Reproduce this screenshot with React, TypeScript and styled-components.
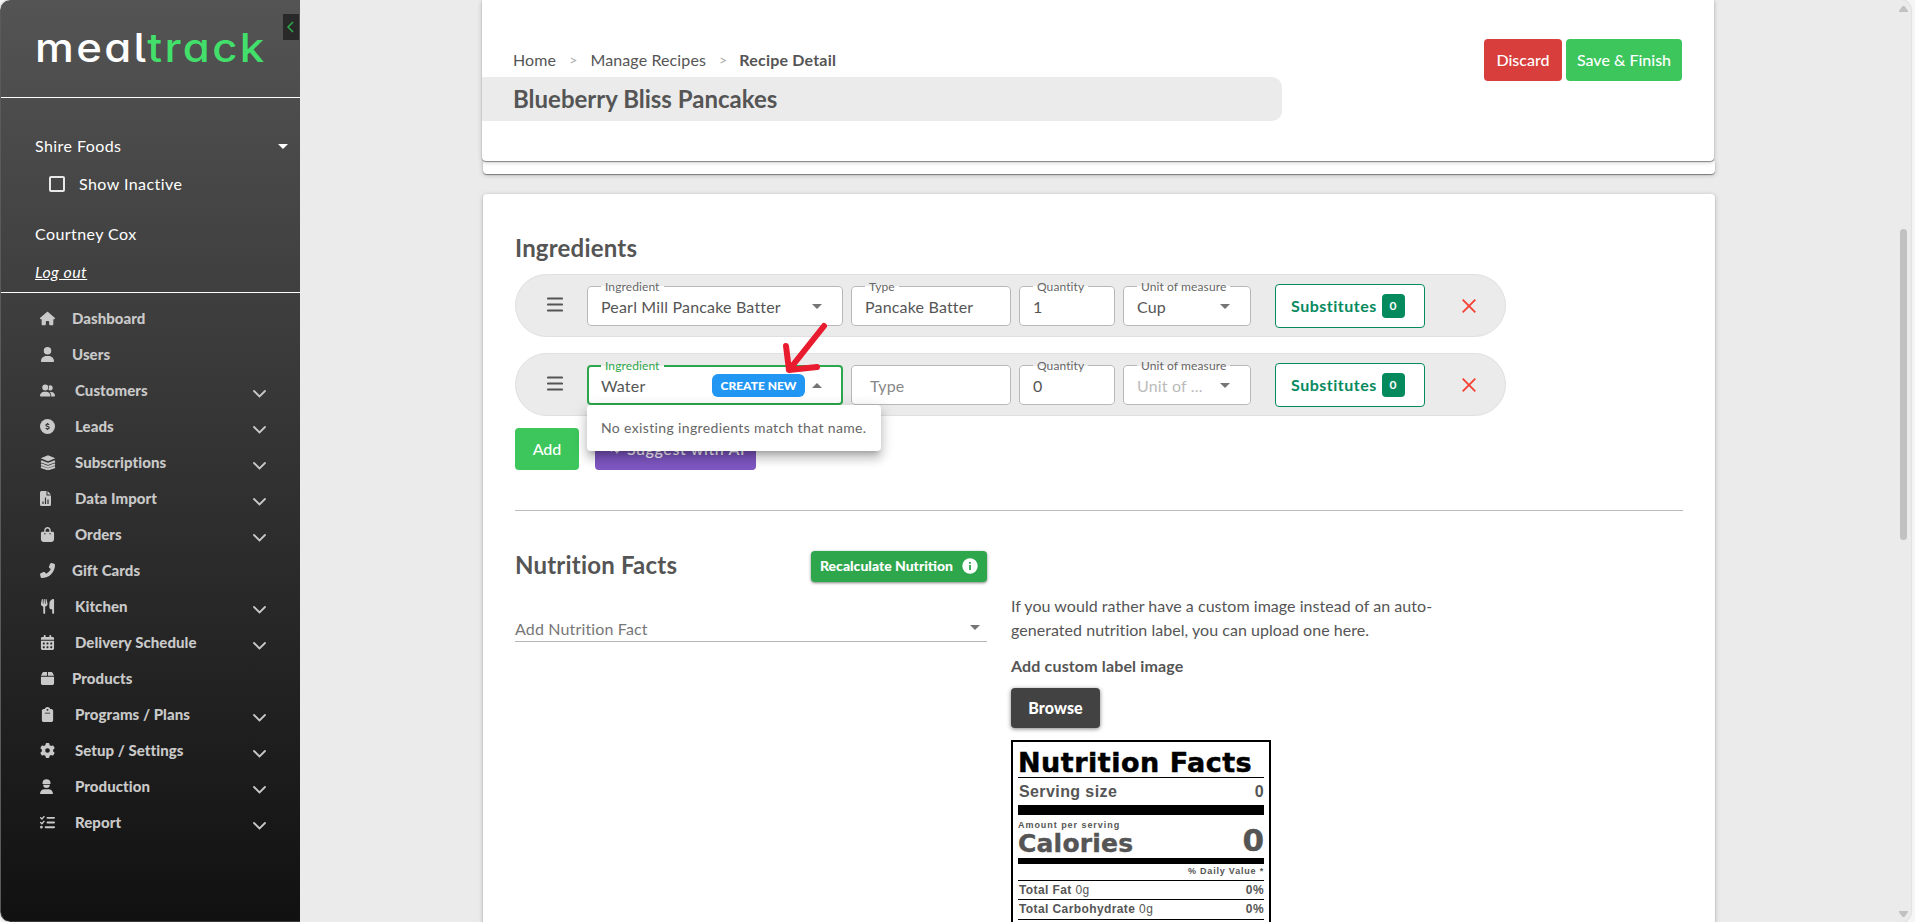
import React from 'react'
import styled, { createGlobalStyle, css } from 'styled-components'
import { IconType } from 'react-icons'
import {
  FaBagShopping,
  FaBox,
  FaCalendarDays,
  FaClipboard,
  FaGear,
  FaHouse,
  FaListCheck,
  FaPhoneFlip,
  FaUser,
  FaUserGroup,
  FaUtensils,
} from 'react-icons/fa6'

/** Types **/
type MenuItem = {
  label: string
  icon: IconType | React.FC
  expandable?: boolean
}

type Ingredient = {
  name: string
  type: string
  quantity: string
  unit: string
  active?: boolean
}

/** Icons **/
const LeadsIcon = () => (
  <svg width="15" height="15" viewBox="0 0 15 15">
    <circle cx="7.5" cy="7.5" r="7.5" fill="currentColor" />
    <path
      d="M9.2 5.8C8.8 4.9 5.9 4.7 5.9 6.2c0 1.5 3.3.9 3.3 2.5 0 1.6-3 1.5-3.5.4M7.5 4v1M7.5 10v1"
      fill="none"
      stroke="#333"
      strokeWidth="1.1"
    />
  </svg>
)

const StackIcon = () => (
  <svg width="16" height="15" viewBox="0 0 16 15">
    <path d="M8 .3 15.3 3.3 8 6.3.7 3.3z" fill="currentColor" />
    <path
      d="M1 6.3 8 9l7-2.7M1 9.2l7 2.7 7-2.7M1 12l7 2.4L15 12"
      fill="none"
      stroke="currentColor"
      strokeWidth="2"
    />
  </svg>
)

const FileChartIcon = () => (
  <svg width="11" height="15" viewBox="0 0 11 15">
    <path
      d="M1.5 0H6.5V4.5H11V13.5a1.5 1.5 0 0 1-1.5 1.5h-8A1.5 1.5 0 0 1 0 13.5v-12A1.5 1.5 0 0 1 1.5 0zM7.5 0 11 3.5H7.5z"
      fill="currentColor"
    />
    <path d="M3 10.5v2.5M5.5 6.5V13M8 8.5V13" stroke="#333" strokeWidth="1.2" />
  </svg>
)

const WorkerIcon = () => (
  <svg width="13" height="15" viewBox="0 0 13 15">
    <path
      d="M2.5 4.2a4 4 0 0 1 8 0v.9h-8zM3.2 5.7h6.6a3.3 3.3 0 0 1-6.6 0zM0 15c0-3 2-4.7 4.4-4.7h4.2C11 10.3 13 12 13 15z"
      fill="currentColor"
    />
  </svg>
)

const ChevronIcon = () => (
  <svg width="13" height="8" viewBox="0 0 13 8">
    <path
      d="M1 1l5.5 5.5L12 1"
      fill="none"
      stroke="currentColor"
      strokeWidth="1.8"
      strokeLinecap="round"
    />
  </svg>
)

const menu: MenuItem[] = [
  { label: 'Dashboard', icon: FaHouse },
  { label: 'Users', icon: FaUser },
  { label: 'Customers', icon: FaUserGroup, expandable: true },
  { label: 'Leads', icon: LeadsIcon, expandable: true },
  { label: 'Subscriptions', icon: StackIcon, expandable: true },
  { label: 'Data Import', icon: FileChartIcon, expandable: true },
  { label: 'Orders', icon: FaBagShopping, expandable: true },
  { label: 'Gift Cards', icon: FaPhoneFlip },
  { label: 'Kitchen', icon: FaUtensils, expandable: true },
  { label: 'Delivery Schedule', icon: FaCalendarDays, expandable: true },
  { label: 'Products', icon: FaBox },
  { label: 'Programs / Plans', icon: FaClipboard, expandable: true },
  { label: 'Setup / Settings', icon: FaGear, expandable: true },
  { label: 'Production', icon: WorkerIcon, expandable: true },
  { label: 'Report', icon: FaListCheck, expandable: true },
]

const ingredients: Ingredient[] = [
  { name: 'Pearl Mill Pancake Batter', type: 'Pancake Batter', quantity: '1', unit: 'Cup' },
  { name: 'Water', type: '', quantity: '0', unit: '', active: true },
]

/** Layout **/
const GlobalStyle = createGlobalStyle`
  * {
    box-sizing: border-box;
  }
  body {
    margin: 0;
    overflow: hidden;
    background: #f6f6f6;
    color: #555;
    font-family: Lato, 'Liberation Sans', sans-serif;
    font-size: 16px;
  }
  svg {
    display: block;
    flex: none;
  }
`

const Page = styled.div`
  display: flex;
  width: 1911px;
  height: 922px;
  overflow: hidden;
  border-radius: 10px;
  background: #ebebeb;
  box-shadow: 0 0 1px 1px #e0e0e0;
`

const Sidebar = styled.aside`
  position: relative;
  flex: none;
  width: 300px;
  border-left: 1px solid #5a5a5a;
  border-bottom: 1px solid #3a3a3a;
  border-radius: 10px 0 0 10px;
  background: linear-gradient(#545454, #111);
  color: #fff;
`

const LogoArea = styled.div`
  height: 98px;
  padding: 17px 0 0 34px;
  border-bottom: 1px solid #fff;
`

const Logo = styled.div`
  width: 210px;
  font-family: Inter, sans-serif;
  font-weight: 500;
  font-size: 39px;
  line-height: 62px;
  letter-spacing: 2.1px;
  font-feature-settings: 'cv11', 'cv05', 'ss03';
  white-space: nowrap;
  transform: scaleX(1.12);
  transform-origin: left;

  > span {
    color: #43df6b;
  }
`

const Collapse = styled.button`
  position: absolute;
  top: 14px;
  right: 1px;
  display: flex;
  align-items: center;
  justify-content: center;
  width: 16px;
  height: 26px;
  padding: 0 2px 0 0;
  border: 0;
  background: #292929;
  color: #2eae4d;
`

const Account = styled.div`
  display: flex;
  flex-direction: column;
  height: 195px;
  padding: 36px 12px 0 34px;
  border-bottom: 1px solid #fff;
  line-height: 24px;
  letter-spacing: 0.43px;
`

const Company = styled.div`
  display: flex;
  align-items: center;
  justify-content: space-between;
`

const Inactive = styled.label`
  display: flex;
  align-items: center;
  gap: 14px;
  margin: 14px 0 26px 14px;
`

const Box = styled.span`
  width: 16px;
  height: 16px;
  border: 2px solid #e8e8e8;
  border-radius: 2px;
`

const Logout = styled.a`
  margin-top: 14px;
  font-style: italic;
  text-decoration: underline;
`

const Nav = styled.nav`
  padding: 7px 34px 0 39px;
  color: #c9c9c9;
`

const NavItem = styled.div`
  display: flex;
  align-items: center;
  height: 36px;
  font-weight: 900;
  font-size: 15px;
  letter-spacing: 0.05px;
`

const NavIcon = styled.span<{ $expandable?: boolean }>`
  width: ${({ $expandable }) => ($expandable ? 35 : 32)}px;

  > svg {
    width: auto;
    height: 15px;
  }
`

const NavChevron = styled.span`
  margin: 8px 0 0 auto;
`

const Main = styled.main`
  display: flex;
  flex: 1;
  flex-direction: column;
  align-items: flex-start;
  padding-left: 182px;
`

const cardShadow = css`
  box-shadow: 0 1px 1px rgba(0, 0, 0, 0.4), 0 1px 5px rgba(0, 0, 0, 0.22);
`

const HeaderCard = styled.header`
  ${cardShadow}
  z-index: 1;
  flex: none;
  width: 1232px;
  height: 161px;
  padding-top: 39px;
  border-radius: 0 0 4px 4px;
  background: #fff;
`

const BehindCard = styled.div`
  ${cardShadow}
  flex: none;
  width: 1232px;
  height: 13px;
  margin-left: 1px;
  border-radius: 0 0 4px 4px;
  background: #fff;
`

const HeaderTop = styled.div`
  display: flex;
  justify-content: space-between;
  height: 38px;
  padding: 0 32px 0 31px;
`

const Breadcrumb = styled.div`
  display: flex;
  gap: 13px;
  padding-top: 9px;
  line-height: 24px;
  letter-spacing: 0.12px;

  > i {
    color: #aaa;
    font-style: normal;
    font-size: 14px;
  }
  > b {
    margin-left: -1px;
    letter-spacing: 0.2px;
  }
`

const Title = styled.h1`
  width: 800px;
  height: 44px;
  margin: 0;
  padding-left: 31px;
  border-radius: 0 10px 10px 0;
  background: #ebebeb;
  font-size: 24px;
  line-height: 44px;
`

const Actions = styled.div<{ $gap: number; $top?: number }>`
  display: flex;
  gap: ${({ $gap }) => $gap}px;
  margin-top: ${({ $top }) => $top || 0}px;
`

const Button = styled.button<{ $color: string; $width: number; $spacing?: number }>`
  display: flex;
  align-items: center;
  justify-content: center;
  gap: 7px;
  width: ${({ $width }) => $width}px;
  height: 42px;
  padding: 0 0 2px;
  border: 0;
  border-radius: 4px;
  background: ${({ $color }) => $color};
  color: #fff;
  font: 500 16px Lato, sans-serif;
  letter-spacing: ${({ $spacing }) => $spacing || 0}px;
  white-space: nowrap;
`

const ContentCard = styled.section`
  ${cardShadow}
  flex: none;
  width: 1232px;
  height: 760px;
  margin: 20px 0 0 1px;
  padding: 37px 32px 0;
  border-radius: 4px;
  background: #fff;
`

const Heading = styled.h2<{ $bottom?: number }>`
  margin: 0 0 ${({ $bottom }) => $bottom || 0}px;
  font-weight: 700;
  font-size: 24px;
  line-height: 34px;
  letter-spacing: 0.2px;
`

/** Ingredient rows **/
const Row = styled.div`
  display: flex;
  align-items: flex-start;
  width: 991px;
  height: 63px;
  margin: 0 0 16px;
  padding: 11px 0 0 31px;
  border: 1px solid #e0e0e0;
  border-radius: 32px;
  background: #ebebeb;
`

const Handle = styled.div`
  width: 40px;
  padding-top: 11px;
`

const FieldBox = styled.fieldset<{ $width: number; $active?: boolean }>`
  position: relative;
  display: flex;
  align-items: center;
  width: ${({ $width }) => $width}px;
  height: 40px;
  min-width: 0;
  margin: 0 8px 0 0;
  padding: 0 20px 0 ${({ $active }) => ($active ? 12 : 13)}px;
  border: ${({ $active }) => ($active ? '2px solid #2ea64c' : '1px solid #b8b8b8')};
  border-radius: 4px;
  background: #fff;
  white-space: nowrap;
`

const FieldLabel = styled.span<{ $active?: boolean }>`
  position: absolute;
  top: ${({ $active }) => ($active ? -9 : -8)}px;
  left: ${({ $active }) => ($active ? 12 : 13)}px;
  padding: 0 4px;
  background: linear-gradient(#ebebeb 50%, #fff 50%);
  color: ${({ $active }) => ($active ? '#2ea64c' : '#666')};
  font-size: 12px;
  line-height: 15px;
  letter-spacing: 0.1px;
`

const Value = styled.span<{ $tone?: string; $indent?: number }>`
  flex: 1;
  padding-left: ${({ $indent }) => $indent || 0}px;
  color: ${({ $tone }) => $tone || '#555'};
  letter-spacing: 0.18px;
`

const CreateNew = styled.button`
  width: 93px;
  height: 23px;
  margin: 1px 7px 0 0;
  padding: 0;
  border: 0;
  border-radius: 6px;
  background: #2196f3;
  color: #fff;
  font: 900 12px Lato, sans-serif;
`

const Caret = styled.span<{ $up?: boolean; $light?: boolean }>`
  flex: none;
  width: 0;
  margin-right: ${({ $up }) => ($up ? -1 : 0)}px;
  border: 5px solid transparent;
  border-width: ${({ $up }) => ($up ? '0 5px 5px' : '5px 5px 0')};
  border-${({ $up }) => ($up ? 'bottom' : 'top')}-color: ${({ $light }) =>
    $light ? '#fff' : '#757575'};
`

const Substitutes = styled.button`
  display: flex;
  align-items: center;
  gap: 5px;
  width: 150px;
  height: 44px;
  margin: -2px 0 0 16px;
  padding: 0 0 1px 15px;
  border: 1px solid #058a5e;
  border-radius: 4px;
  background: #fff;
  color: #058a5e;
  font: 700 16px Lato, sans-serif;
  letter-spacing: 0.5px;

  > span {
    width: 23px;
    height: 24px;
    border-radius: 4px;
    background: #058a5e;
    color: #fff;
    font-size: 12px;
    line-height: 23px;
    text-align: center;
  }
`

const Remove = styled.div`
  padding: 13px 0 0 37px;
`

const Popup = styled.div`
  position: absolute;
  z-index: 3;
  top: 38px;
  left: -2px;
  width: 294px;
  height: 46px;
  padding-left: 14px;
  border-radius: 4px;
  background: #fff;
  box-shadow: 0 5px 5px -3px rgba(0, 0, 0, 0.2), 0 8px 10px 1px rgba(0, 0, 0, 0.14),
    0 3px 14px 2px rgba(0, 0, 0, 0.12);
  color: #666;
  font-size: 14px;
  line-height: 46px;
  letter-spacing: 0.36px;
`

const Arrow = styled.svg`
  position: absolute;
  z-index: 4;
  top: -46px;
  left: 189px;
`

const Divider = styled.hr`
  height: 1px;
  margin: 40px 0 0;
  border: 0;
  background: #bdbdbd;
`

/** Nutrition section **/
const Columns = styled.div`
  display: flex;
  gap: 24px;
`

const Left = styled.div`
  width: 472px;
`

const NutritionHead = styled.div`
  display: flex;
  justify-content: space-between;
  height: 72px;
  padding-top: 37px;
`

const Recalculate = styled.button`
  display: flex;
  align-items: center;
  justify-content: space-between;
  width: 176px;
  height: 31px;
  margin-top: 3px;
  padding: 0 9px 2px;
  border: 0;
  border-radius: 4px;
  background: #2ea64c;
  box-shadow: 0 1px 3px rgba(0, 0, 0, 0.5);
  color: #fff;
  font: 900 14px Lato, sans-serif;
  white-space: nowrap;
`

const NutritionSelect = styled.div`
  display: flex;
  align-items: center;
  justify-content: space-between;
  height: 27px;
  margin-top: 32px;
  padding: 0 7px 0 0;
  border-bottom: 1px solid #b5b5b5;
  color: #777;
  letter-spacing: 0.15px;

  > ${Caret} {
    margin-bottom: 1px;
  }
`

const Right = styled.div`
  width: 440px;
  padding-top: 83px;
  line-height: 24px;
  letter-spacing: 0.04px;
`

const LabelTitle = styled.div`
  margin: 12px 0 10px;
  font-weight: 700;
  letter-spacing: 0.15px;
`

const Browse = styled.button`
  display: block;
  width: 89px;
  height: 40px;
  padding: 0 0 1px;
  border: 0;
  border-radius: 4px;
  background: #424242;
  box-shadow: 0 1px 4px rgba(0, 0, 0, 0.5);
  color: #fff;
  font: 900 16px Lato, sans-serif;
  letter-spacing: 0.1px;
`

const Label = styled.div`
  width: 260px;
  height: 240px;
  margin-top: 12px;
  padding: 6px 5px;
  border: 2px solid #000;
  font-family: 'Liberation Sans', Arial, sans-serif;
  font-weight: 700;
`

const LabelHeading = styled.div`
  height: 30px;
  border-bottom: 1px solid #000;
  color: #000;
  font-family: 'DejaVu Sans', sans-serif;
  font-weight: 700;
  font-size: 27px;
  line-height: 30px;
  letter-spacing: 0.5px;
  white-space: nowrap;
  -webkit-text-stroke: 0.5px #000;
`

const LabelRow = styled.div<{ $height: number; $size: number; $spacing?: number; $rule?: boolean }>`
  display: flex;
  align-items: center;
  justify-content: space-between;
  height: ${({ $height }) => $height}px;
  padding: 0 0 ${({ $rule }) => ($rule ? 1 : 0)}px 1px;
  border-bottom: ${({ $rule }) => ($rule ? '1px solid #000' : '0')};
  font-size: ${({ $size }) => $size}px;
  line-height: 1;
  letter-spacing: ${({ $spacing }) => $spacing || 0}px;
  white-space: nowrap;

  i {
    font-style: normal;
    font-weight: 400;
  }
`

const Bar = styled.div<{ $height: number }>`
  height: ${({ $height }) => $height}px;
  background: #000;
`

const Calories = styled.div`
  display: flex;
  align-items: flex-end;
  justify-content: space-between;
  height: 43px;
  padding: 0 0 1px;
`

const CaloriesText = styled.div`
  font-size: 9px;
  line-height: 12px;
  letter-spacing: 0.95px;

  > div {
    font-family: 'DejaVu Sans', sans-serif;
    font-weight: 700;
    font-size: 25px;
    line-height: 26px;
    letter-spacing: 0.2px;
    -webkit-text-stroke: 0.4px #555;
  }
`

const CaloriesValue = styled.div`
  padding-bottom: 1px;
  font-family: 'DejaVu Sans', sans-serif;
  font-weight: 700;
  font-size: 31px;
  line-height: 32px;
  -webkit-text-stroke: 0.4px #555;
`

/** Scrollbar **/
const Scrollbar = styled.div`
  display: flex;
  flex: none;
  flex-direction: column;
  align-items: center;
  width: 15px;
  margin-left: auto;
  padding: 6px 0 5px;
`

const Thumb = styled.div`
  width: 7px;
  height: 311px;
  margin: 217px 0 auto;
  border-radius: 4px;
  background: #c1c1c1;
`

const Field = ({
  label,
  value,
  width,
  placeholder,
  select,
}: {
  label: string
  value: string
  width: number
  placeholder?: string
  select?: boolean
}) => (
  <FieldBox $width={width}>
    {(value || select) && <FieldLabel>{label}</FieldLabel>}
    <Value $tone={value ? '#555' : select ? '#bbb' : '#888'} $indent={value || select ? 0 : 5}>
      {value || placeholder}
    </Value>
    {select && <Caret />}
  </FieldBox>
)

const IngredientRow = ({ name, type, quantity, unit, active }: Ingredient) => (
  <Row>
    <Handle>
      <svg width="16" height="15" viewBox="0 0 16 15">
        <path
          d="M1 1.5h14M1 7.5h14M1 13.5h14"
          stroke="#555"
          strokeWidth="2.2"
          strokeLinecap="round"
        />
      </svg>
    </Handle>
    <FieldBox $width={256} $active={active}>
      <FieldLabel $active={active}>Ingredient</FieldLabel>
      <Value>{name}</Value>
      {active && <CreateNew>CREATE NEW</CreateNew>}
      <Caret $up={active} />
      {active && <Popup>No existing ingredients match that name.</Popup>}
      {active && (
        <Arrow width="60" height="54" viewBox="0 0 60 54" fill="none">
          <path
            d="M46 5 11 49M8 25l3 24 28-3"
            stroke="#e81c2e"
            strokeWidth="6"
            strokeLinecap="round"
            strokeLinejoin="round"
          />
        </Arrow>
      )}
    </FieldBox>
    <Field label="Type" value={type} placeholder="Type" width={160} />
    <Field label="Quantity" value={quantity} width={96} />
    <Field label="Unit of measure" value={unit} placeholder="Unit of ..." width={128} select />
    <Substitutes>
      Substitutes <span>0</span>
    </Substitutes>
    <Remove>
      <svg width="14" height="14" viewBox="0 0 14 14">
        <path d="M.7.7l12.6 12.6M13.3.7.7 13.3" stroke="#f44336" strokeWidth="1.9" />
      </svg>
    </Remove>
  </Row>
)

const App = () => (
  <>
    <GlobalStyle />
    <Page>
      <Sidebar>
        <LogoArea>
          <Logo>
            meal<span>track</span>
          </Logo>
        </LogoArea>
        <Collapse>
          <svg width="7" height="12" viewBox="0 0 7 12">
            <path d="M6 1 1 6l5 5" fill="none" stroke="currentColor" strokeWidth="1.5" />
          </svg>
        </Collapse>
        <Account>
          <Company>
            Shire Foods <Caret $light />
          </Company>
          <Inactive>
            <Box /> Show Inactive
          </Inactive>
          Courtney Cox
          <Logout>Log out</Logout>
        </Account>
        <Nav>
          {menu.map(({ label, icon: Icon, expandable }) => (
            <NavItem key={label}>
              <NavIcon $expandable={expandable}>
                <Icon />
              </NavIcon>
              {label}
              {expandable && (
                <NavChevron>
                  <ChevronIcon />
                </NavChevron>
              )}
            </NavItem>
          ))}
        </Nav>
      </Sidebar>
      <Main>
        <HeaderCard>
          <HeaderTop>
            <Breadcrumb>
              Home <i>&gt;</i> Manage Recipes <i>&gt;</i> <b>Recipe Detail</b>
            </Breadcrumb>
            <Actions $gap={4}>
              <Button $color="#d83e3b" $width={78}>
                Discard
              </Button>
              <Button $color="#3cc65c" $width={116}>
                Save &amp; Finish
              </Button>
            </Actions>
          </HeaderTop>
          <Title>Blueberry Bliss Pancakes</Title>
        </HeaderCard>
        <BehindCard />
        <ContentCard>
          <Heading $bottom={9}>Ingredients</Heading>
          {ingredients.map((i) => (
            <IngredientRow key={i.name} {...i} />
          ))}
          <Actions $gap={16} $top={-4}>
            <Button $color="#3cc65c" $width={64}>
              Add
            </Button>
            <Button $color="#7e57c2" $width={161} $spacing={0.6}>
              <svg width="14" height="16" viewBox="0 0 16 16" fill="#fff">
                <path d="M6 2l1.4 4.1L11.5 7.5 7.4 9 6 13 4.6 9 .5 7.5l4.1-1.4zM12.5 9l.8 2.2 2.2.8-2.2.8-.8 2.2-.8-2.2-2.2-.8 2.2-.8z" />
              </svg>
              Suggest with AI
            </Button>
          </Actions>
          <Divider />
          <Columns>
            <Left>
              <NutritionHead>
                <Heading>Nutrition Facts</Heading>
                <Recalculate>
                  Recalculate Nutrition
                  <svg width="16" height="16" viewBox="0 0 16 16">
                    <circle cx="8" cy="8" r="7.7" fill="#fff" />
                    <path d="M8 7v5M8 4v1.8" stroke="#2ea64c" strokeWidth="1.8" />
                  </svg>
                </Recalculate>
              </NutritionHead>
              <NutritionSelect>
                Add Nutrition Fact <Caret />
              </NutritionSelect>
            </Left>
            <Right>
              If you would rather have a custom image instead of an auto-
              <br />
              generated nutrition label, you can upload one here.
              <LabelTitle>Add custom label image</LabelTitle>
              <Browse>Browse</Browse>
              <Label>
                <LabelHeading>Nutrition Facts</LabelHeading>
                <LabelRow $height={27} $size={16} $spacing={0.4}>
                  <span>Serving size</span>
                  <span>0</span>
                </LabelRow>
                <Bar $height={10} />
                <Calories>
                  <CaloriesText>
                    Amount per serving
                    <div>Calories</div>
                  </CaloriesText>
                  <CaloriesValue>0</CaloriesValue>
                </Calories>
                <Bar $height={6} />
                <LabelRow $height={17} $size={9} $spacing={0.8} $rule>
                  <span />
                  <span>% Daily Value *</span>
                </LabelRow>
                <LabelRow $height={19} $size={12} $spacing={0.4} $rule>
                  <span>
                    Total Fat <i>0g</i>
                  </span>
                  <span>0%</span>
                </LabelRow>
                <LabelRow $height={20} $size={12} $spacing={0.4} $rule>
                  <span>
                    Total Carbohydrate <i>0g</i>
                  </span>
                  <span>0%</span>
                </LabelRow>
              </Label>
            </Right>
          </Columns>
        </ContentCard>
      </Main>
      <Scrollbar>
        <svg width="9" height="6" viewBox="0 0 9 6">
          <path d="M3.5 0h2L9 5v1H0V5z" fill="#c1c1c1" />
        </svg>
        <Thumb />
        <svg width="9" height="6" viewBox="0 0 9 6">
          <path d="M3.5 6h2L9 1V0H0v1z" fill="#c1c1c1" />
        </svg>
      </Scrollbar>
    </Page>
  </>
)

export default App
